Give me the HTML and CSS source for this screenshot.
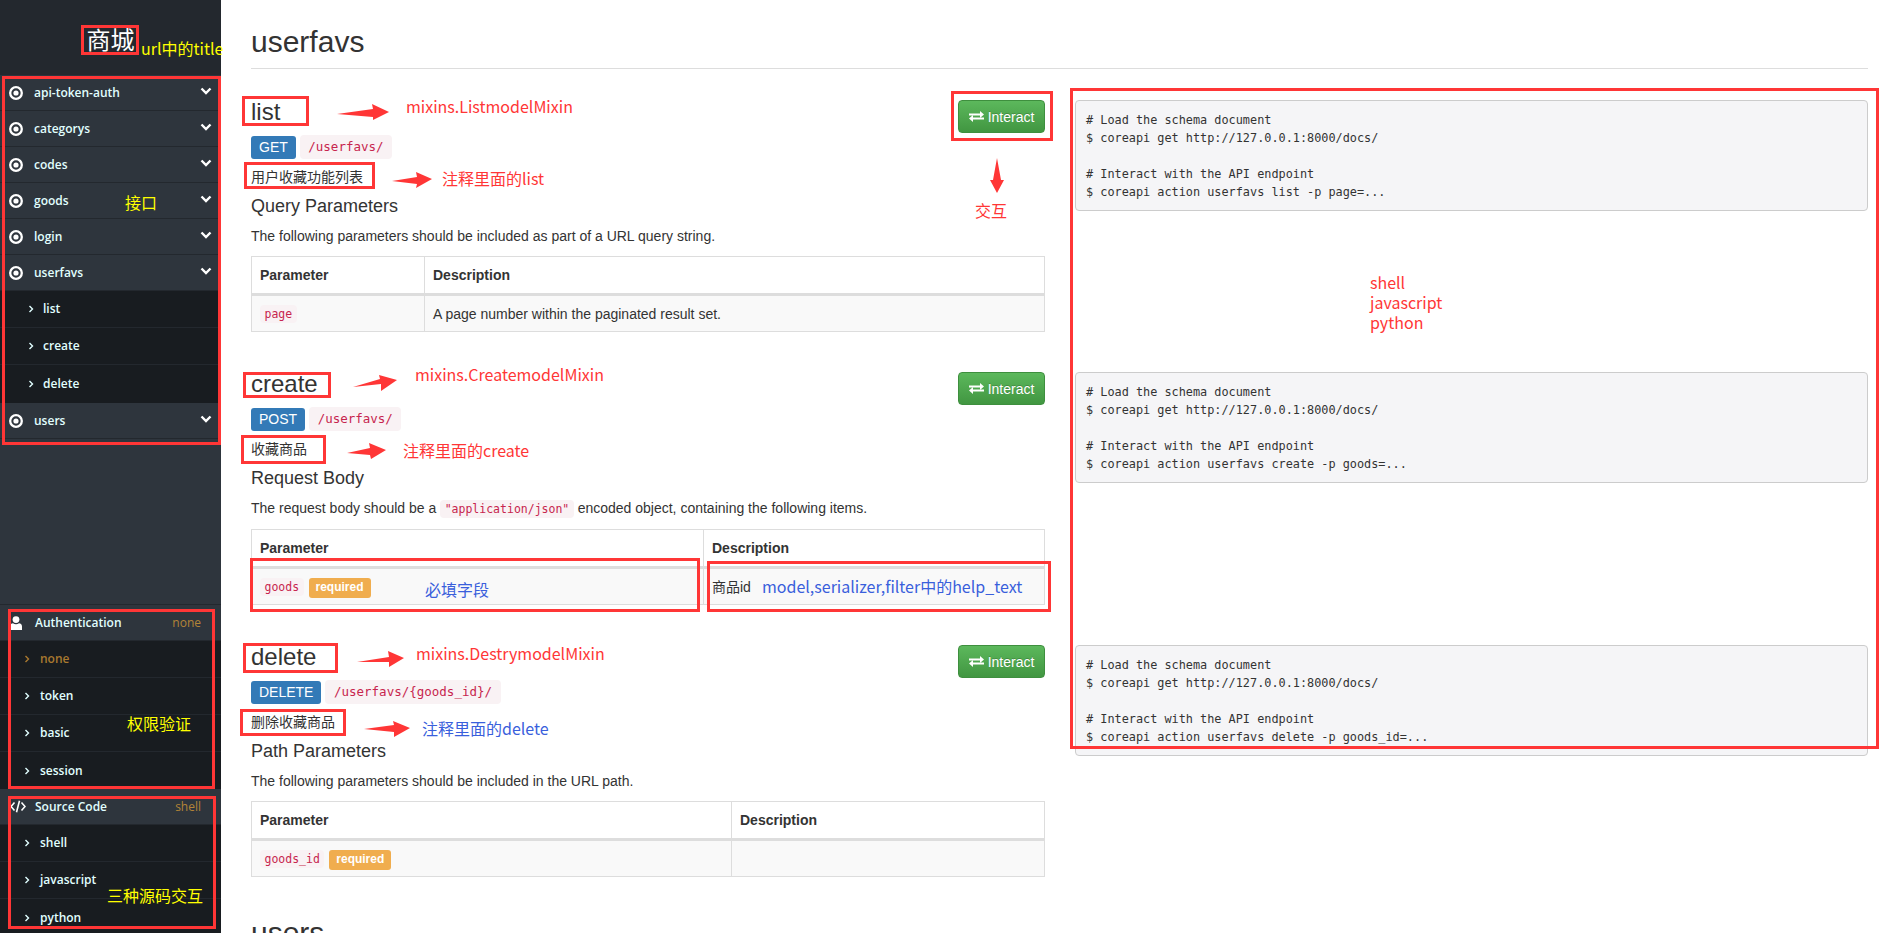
FILE: index.html
```html
<!DOCTYPE html>
<html lang="zh">
<head>
<meta charset="utf-8">
<title>商城</title>
<link rel="stylesheet" href="styles.css">
</head>
<body>
<div class="app">
  <aside class="sidebar">
    <div class="brand">商城</div>
    <nav class="menu">
      <div class="nav-row"><svg class="ico-dot" viewBox="0 0 14 14"><circle cx="7" cy="7" r="5.8"/><circle class="dot" cx="7" cy="7" r="2.6"/></svg><span>api-token-auth</span><svg class="ico-chev" viewBox="0 0 12 8"><path d="M1.5 1.5 6 6l4.5-4.5"/></svg></div>
      <div class="nav-row"><svg class="ico-dot" viewBox="0 0 14 14"><circle cx="7" cy="7" r="5.8"/><circle class="dot" cx="7" cy="7" r="2.6"/></svg><span>categorys</span><svg class="ico-chev" viewBox="0 0 12 8"><path d="M1.5 1.5 6 6l4.5-4.5"/></svg></div>
      <div class="nav-row"><svg class="ico-dot" viewBox="0 0 14 14"><circle cx="7" cy="7" r="5.8"/><circle class="dot" cx="7" cy="7" r="2.6"/></svg><span>codes</span><svg class="ico-chev" viewBox="0 0 12 8"><path d="M1.5 1.5 6 6l4.5-4.5"/></svg></div>
      <div class="nav-row"><svg class="ico-dot" viewBox="0 0 14 14"><circle cx="7" cy="7" r="5.8"/><circle class="dot" cx="7" cy="7" r="2.6"/></svg><span>goods</span><svg class="ico-chev" viewBox="0 0 12 8"><path d="M1.5 1.5 6 6l4.5-4.5"/></svg></div>
      <div class="nav-row"><svg class="ico-dot" viewBox="0 0 14 14"><circle cx="7" cy="7" r="5.8"/><circle class="dot" cx="7" cy="7" r="2.6"/></svg><span>login</span><svg class="ico-chev" viewBox="0 0 12 8"><path d="M1.5 1.5 6 6l4.5-4.5"/></svg></div>
      <div class="nav-row"><svg class="ico-dot" viewBox="0 0 14 14"><circle cx="7" cy="7" r="5.8"/><circle class="dot" cx="7" cy="7" r="2.6"/></svg><span>userfavs</span><svg class="ico-chev" viewBox="0 0 12 8"><path d="M1.5 1.5 6 6l4.5-4.5"/></svg></div>
      <ul class="sub sub-links">
        <li><svg class="ico-sub" viewBox="0 0 6 8"><path d="M1.5 1 4.5 4l-3 3"/></svg>list</li>
        <li><svg class="ico-sub" viewBox="0 0 6 8"><path d="M1.5 1 4.5 4l-3 3"/></svg>create</li>
        <li><svg class="ico-sub" viewBox="0 0 6 8"><path d="M1.5 1 4.5 4l-3 3"/></svg>delete</li>
      </ul>
      <div class="nav-row"><svg class="ico-dot" viewBox="0 0 14 14"><circle cx="7" cy="7" r="5.8"/><circle class="dot" cx="7" cy="7" r="2.6"/></svg><span>users</span><svg class="ico-chev" viewBox="0 0 12 8"><path d="M1.5 1.5 6 6l4.5-4.5"/></svg></div>
    </nav>
    <div class="settings">
      <div class="nav-row"><svg class="ico-user" viewBox="0 0 12 14"><circle cx="6" cy="3.6" r="3.4"/><path d="M0 14v-3.6C0 8.300 1.600 7.200 3 7.200c.8.700 1.900 1 3 1s2.200-.3 3-1c1.400 0 3 1.100 3 3.200V14z"/></svg><span>Authentication</span><em class="current">none</em></div>
      <ul class="sub sub-settings">
        <li class="active"><svg class="ico-sub" viewBox="0 0 6 8"><path d="M1.500 1 4.500 4l-3 3"/></svg>none</li>
        <li><svg class="ico-sub" viewBox="0 0 6 8"><path d="M1.500 1 4.500 4l-3 3"/></svg>token</li>
        <li><svg class="ico-sub" viewBox="0 0 6 8"><path d="M1.500 1 4.500 4l-3 3"/></svg>basic</li>
        <li><svg class="ico-sub" viewBox="0 0 6 8"><path d="M1.500 1 4.500 4l-3 3"/></svg>session</li>
      </ul>
      <div class="nav-row"><svg class="ico-code" viewBox="0 0 16 13"><path d="M4.500 2.500 1 6.500l3.500 4M11.500 2.500l3.500 4-3.500 4M9.500 .8 6.500 12.200"/></svg><span>Source Code</span><em class="current">shell</em></div>
      <ul class="sub sub-settings">
        <li><svg class="ico-sub" viewBox="0 0 6 8"><path d="M1.500 1 4.500 4l-3 3"/></svg>shell</li>
        <li><svg class="ico-sub" viewBox="0 0 6 8"><path d="M1.500 1 4.500 4l-3 3"/></svg>javascript</li>
        <li><svg class="ico-sub" viewBox="0 0 6 8"><path d="M1.500 1 4.500 4l-3 3"/></svg>python</li>
      </ul>
    </div>
  </aside>

  <main class="content">
    <h1 class="group-title">userfavs</h1>

    <section class="method">
      <div class="method-info">
        <a class="btn-interact"><svg class="ico-swap" viewBox="0 0 15 11"><path d="M0 2.500h11V0l4 3.500-4 3.500V4.500H0zM15 6.500H4V4L0 7.500 4 11V8.500h11z"/></svg>Interact</a>
        <h3>list</h3>
        <div class="endpoint"><span class="verb">GET</span><code class="path">/userfavs/</code></div>
        <p class="desc">用户收藏功能列表</p>
        <h4>Query Parameters</h4>
        <p class="lead">The following parameters should be included as part of a URL query string.</p>
        <table class="params">
          <thead><tr><th class="col-a">Parameter</th><th>Description</th></tr></thead>
          <tbody><tr><td><code class="tag">page</code></td><td>A page number within the paginated result set.</td></tr></tbody>
        </table>
      </div>
      <pre class="sample"># Load the schema document
$ coreapi get http://127.0.0.1:8000/docs/

# Interact with the API endpoint
$ coreapi action userfavs list -p page=...</pre>
    </section>

    <section class="method">
      <div class="method-info">
        <a class="btn-interact"><svg class="ico-swap" viewBox="0 0 15 11"><path d="M0 2.500h11V0l4 3.500-4 3.500V4.500H0zM15 6.500H4V4L0 7.500 4 11V8.500h11z"/></svg>Interact</a>
        <h3>create</h3>
        <div class="endpoint"><span class="verb">POST</span><code class="path">/userfavs/</code></div>
        <p class="desc">收藏商品</p>
        <h4>Request Body</h4>
        <p class="lead">The request body should be a <code class="tag">"application/json"</code> encoded object, containing the following items.</p>
        <table class="params">
          <thead><tr><th class="col-b">Parameter</th><th>Description</th></tr></thead>
          <tbody><tr><td><code class="tag">goods</code> <span class="req">required</span></td><td>商品id</td></tr></tbody>
        </table>
      </div>
      <pre class="sample"># Load the schema document
$ coreapi get http://127.0.0.1:8000/docs/

# Interact with the API endpoint
$ coreapi action userfavs create -p goods=...</pre>
    </section>

    <section class="method">
      <div class="method-info">
        <a class="btn-interact"><svg class="ico-swap" viewBox="0 0 15 11"><path d="M0 2.500h11V0l4 3.500-4 3.500V4.500H0zM15 6.500H4V4L0 7.500 4 11V8.500h11z"/></svg>Interact</a>
        <h3>delete</h3>
        <div class="endpoint"><span class="verb">DELETE</span><code class="path">/userfavs/{goods_id}/</code></div>
        <p class="desc">删除收藏商品</p>
        <h4>Path Parameters</h4>
        <p class="lead">The following parameters should be included in the URL path.</p>
        <table class="params">
          <thead><tr><th class="col-c">Parameter</th><th>Description</th></tr></thead>
          <tbody><tr><td><code class="tag">goods_id</code> <span class="req">required</span></td><td></td></tr></tbody>
        </table>
      </div>
      <pre class="sample"># Load the schema document
$ coreapi get http://127.0.0.1:8000/docs/

# Interact with the API endpoint
$ coreapi action userfavs delete -p goods_id=...</pre>
    </section>

    <h1 class="group-title">users</h1>
  </main>
</div>

<div class="annotations">
  <svg class="marks" viewBox="0 0 1890 933">
    <g class="boxes">
      <rect x="82.500" y="26.500" width="55" height="27"/>
      <rect x="3.500" y="77.500" width="216" height="366"/>
      <rect x="9.500" y="610.500" width="204" height="177"/>
      <rect x="9.500" y="797.500" width="205" height="130"/>
      <rect x="243.500" y="97.500" width="64" height="27"/>
      <rect x="245.500" y="163.500" width="128" height="24"/>
      <rect x="952.500" y="92.500" width="99" height="47"/>
      <rect x="1071.500" y="89.500" width="806" height="658"/>
      <rect x="244.500" y="373.500" width="85" height="23"/>
      <rect x="242.500" y="436.500" width="82" height="26"/>
      <rect x="251.500" y="559.500" width="447" height="51"/>
      <rect x="708.500" y="562.500" width="341" height="48"/>
      <rect x="244.500" y="644.500" width="92" height="27"/>
      <rect x="241.500" y="710.500" width="103" height="24"/>
    </g>
    <g class="arrows">
      <polygon points="337,114 373,109 372,104 389,112 373,120 373,117"/>
      <polygon points="392,181 417,177 416,172 432,179 416,188 417,184"/>
      <polygon points="997,158 993,180 990,180 997,193 1004,180 1001,180"/>
      <polygon points="353,387 380,379 379,375 397,380 381,391 381,384"/>
      <polygon points="347,453 370,448 369,443 386,450 371,459 370,455"/>
      <polygon points="357,662 389,657 388,651 404,658 389,667 389,662"/>
      <polygon points="364,729 394,725 393,721 410,728 394,737 394,732"/>
    </g>
  </svg>
  <span class="note yellow n-title">url中的title</span>
  <span class="note yellow n-api">接口</span>
  <span class="note yellow n-auth">权限验证</span>
  <span class="note yellow n-src">三种源码交互</span>
  <span class="note red n-list">mixins.ListmodelMixin</span>
  <span class="note red n-list2">注释里面的list</span>
  <span class="note red n-inter">交互</span>
  <span class="note red n-shell">shell<br>javascript<br>python</span>
  <span class="note red n-create">mixins.CreatemodelMixin</span>
  <span class="note red n-create2">注释里面的create</span>
  <span class="note blue n-req">必填字段</span>
  <span class="note blue n-help">model,serializer,filter中的help_text</span>
  <span class="note red n-delete">mixins.DestrymodelMixin</span>
  <span class="note blue n-delete2">注释里面的delete</span>
</div>
</body>
</html>
```

FILE: styles.css
```css
* { box-sizing: border-box; }
html, body { margin: 0; height: 100%; overflow: hidden; background: #fff; }
body { font-family: "Liberation Sans", "Noto Sans CJK SC", sans-serif; font-size: 14px; line-height: 20px; color: #333; position: relative; }
.app { display: flex; height: 933px; overflow: hidden; }

/* sidebar */
.sidebar { flex: 0 0 221px; background: #2e353d; color: #e1ffff; font-family: "Open Sans", "Noto Sans CJK SC", sans-serif; font-size: 12px; font-weight: 600; overflow: hidden; }
.brand { height: 75px; background: #23282e; color: #fff; font-size: 24px; font-weight: 400; display: flex; align-items: center; justify-content: center; padding: 3px 0 0 0; font-family: "Noto Sans CJK SC", sans-serif; }
.menu { height: 529px; }
.nav-row { height: 36px; display: flex; align-items: center; padding: 0 9px; border-bottom: 1px solid #23282e; }
.nav-row span { margin-left: 11px; }
.ico-dot { width: 14px; height: 14px; flex: none; }
.ico-dot circle { fill: none; stroke: #fff; stroke-width: 2.3; }
.ico-dot .dot { fill: #fff; stroke: none; }
.ico-chev { width: 12px; height: 8px; margin-left: auto; margin-top: -3px; fill: none; stroke: #fff; stroke-width: 2.4; }
.ico-sub { width: 6px; height: 8px; flex: none; fill: none; stroke: #e1ffff; stroke-width: 1.4; }
.sub { list-style: none; margin: 0; padding: 0; background: #181c20; }
.sub li { height: 37px; display: flex; align-items: center; border-bottom: 1px solid #23282e; }
.sub li:last-child { border-bottom: 0; }
.sub-links { padding-bottom: 1px; }
.sub-links li { padding-left: 28px; }
.sub-links .ico-sub { margin-right: 9px; }
.sub-settings li { padding-left: 24px; }
.sub-settings .ico-sub { margin-right: 10px; }
.sub-settings li.active { color: #a9792f; }
.sub-settings li.active .ico-sub { stroke: #a9792f; }
.settings { border-top: 1px solid #23282e; }
.ico-user { width: 12px; height: 14px; flex: none; margin: 0 2px 0 1px; fill: #fff; }
.ico-code { width: 16px; height: 13px; flex: none; margin-left: 1px; margin-right: -2px; fill: none; stroke: #fff; stroke-width: 1.6; }
.current { margin-left: auto; margin-right: 11px; color: #b48437; font-style: normal; font-weight: 400; }

/* main */
.content { flex: 1; padding: 25px 22px 0 30px; min-width: 0; }
.group-title { font-size: 30px; font-weight: 400; line-height: 33px; margin: 0 0 30px; padding-bottom: 10px; border-bottom: 1px solid #ddd; color: #333; }
.method { display: flex; gap: 30px; margin-bottom: 39px; }
.method-info { flex: 0 0 794px; }
.method h3 { font-size: 24px; font-weight: 400; line-height: 26px; margin: 0 0 10px; }
.btn-interact { float: right; margin-top: 1px; width: 87px; height: 33px; display: flex; align-items: center; justify-content: center; gap: 4px; color: #fff; background: linear-gradient(#5cb85c, #419641); border: 1px solid #3e8f3e; border-radius: 4px; text-shadow: 0 -1px 0 rgba(0,0,0,.2); }
.ico-swap { width: 15px; height: 11px; fill: #fff; }
.endpoint { display: flex; gap: 4px; align-items: center; height: 24px; margin-bottom: 8px; }
.verb { height: 23px; padding: 0 8px; background: #337ab7; color: #fff; border-radius: 3px; line-height: 22px; }
code { font-family: "DejaVu Sans Mono", monospace; color: #c7254e; background: #f9f2f4; border-radius: 4px; }
.path { font-size: 12.5px; padding: 0 8.5px; height: 24px; line-height: 23px; }
.desc { margin: 0 0 9px; }
.method h4 { font-size: 18px; font-weight: 400; line-height: 20px; margin: 0 0 10px; }
.lead { margin: 0 0 10px; }
.tag { font-size: 11.5px; padding: 2px 4.500px; }
.params { width: 794px; border-collapse: collapse; table-layout: fixed; }
.params th, .params td { border: 1px solid #ddd; padding: 0 8px; text-align: left; vertical-align: middle; }
.params th { height: 38px; border-bottom-width: 3px; }
.params td { height: 37px; background: #f9f9f9; }
.col-a { width: 173px; }
.col-b { width: 452px; }
.col-c { width: 480px; }
.req { display: inline-block; height: 20px; padding: 0 7px; line-height: 19px; background: #f0ad4e; color: #fff; font-size: 12px; font-weight: 700; border-radius: 3px; margin-left: 1px; }
.sample { flex: 0 0 793px; margin: 1px 0 0; height: 111px; padding: 9.500px 10px; background: #f5f5f7; border: 1px solid #ccc; border-radius: 4px; color: #333; font-family: "DejaVu Sans Mono", monospace; font-size: 11.85px; line-height: 18px; overflow: hidden; }

/* annotation layer */
.annotations { position: absolute; inset: 0; pointer-events: none; overflow: hidden; }
.marks { position: absolute; left: 0; top: 0; width: 1890px; height: 933px; }
.boxes rect { fill: none; stroke: #ff3636; stroke-width: 3; }
.arrows polygon { fill: #ff3636; }
.note { position: absolute; font-family: "Noto Sans CJK SC", sans-serif; font-size: 16px; line-height: 20px; white-space: nowrap; }
.yellow { color: #ffff00; }
.red { color: #ff3636; }
.blue { color: #3a5fdc; }
.n-title { left: 141px; top: 38px; }
.n-api { left: 125px; top: 192px; }
.n-auth { left: 127px; top: 713px; }
.n-src { left: 107px; top: 885px; }
.n-list { left: 406px; top: 96px; }
.n-list2 { left: 442px; top: 168px; }
.n-inter { left: 975px; top: 200px; }
.n-shell { left: 1370px; top: 272px; }
.n-create { left: 415px; top: 364px; }
.n-create2 { left: 403px; top: 440px; }
.n-req { left: 425px; top: 579px; }
.n-help { left: 762px; top: 576px; }
.n-delete { left: 416px; top: 643px; }
.n-delete2 { left: 422px; top: 718px; }
```
